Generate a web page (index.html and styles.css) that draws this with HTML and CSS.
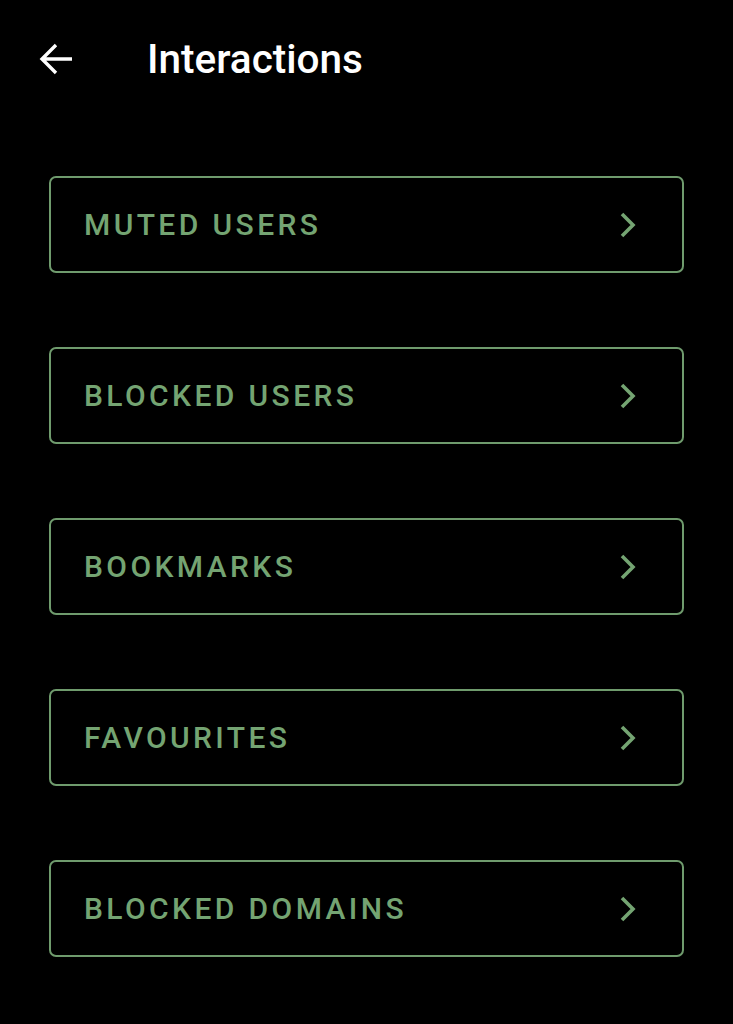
FILE: index.html
```html
<!DOCTYPE html>
<html lang="en">
<head>
  <meta charset="UTF-8">
  <meta name="viewport" content="width=device-width,initial-scale=1">
  <title>Interactions</title>
  <link rel="stylesheet" href="styles.css">
</head>
<body>
  <header class="toolbar">
    <button type="button" class="back-button" aria-label="Back">
      <svg width="34" height="32" viewBox="0 0 34 32"><path d="M3 16H33M17 2L3 16L17 30" fill="none" stroke="#fff" stroke-width="3.4" stroke-linejoin="miter"/></svg>
    </button>
    <h1>Interactions</h1>
  </header>

  <!-- menu entries -->
  <nav class="menu">
    <a class="menu-item" href="#">MUTED USERS<svg class="chevron" width="17" height="26" viewBox="0 0 17 26"><path d="M3 2L14 13L3 24" /></svg></a>
    <a class="menu-item" href="#">BLOCKED USERS<svg class="chevron" width="17" height="26" viewBox="0 0 17 26"><path d="M3 2L14 13L3 24" /></svg></a>
    <a class="menu-item" href="#">BOOKMARKS<svg class="chevron" width="17" height="26" viewBox="0 0 17 26"><path d="M3 2L14 13L3 24" /></svg></a>
    <a class="menu-item" href="#">FAVOURITES<svg class="chevron" width="17" height="26" viewBox="0 0 17 26"><path d="M3 2L14 13L3 24" /></svg></a>
    <a class="menu-item" href="#">BLOCKED DOMAINS<svg class="chevron" width="17" height="26" viewBox="0 0 17 26"><path d="M3 2L14 13L3 24" /></svg></a>
  </nav>
</body>
</html>
```

FILE: styles.css
```css
body {
  margin: 0;
  background: #000;
  color: #fff;
  font-family: Roboto, 'Noto Sans', sans-serif;
}
.toolbar {
  display: flex;
  align-items: center;
  height: 118px;
  padding-left: 39px;
}
.back-button {
  background: none;
  border: none;
  padding: 0;
  width: 34px;
  height: 32px;
  cursor: pointer;
}
.back-button svg {
  display: block;
}
.toolbar h1 {
  margin: 0 0 0 74px;
  font-size: 40.5px;
  font-weight: 500;
}
.menu {
  display: flex;
  flex-direction: column;
  gap: 74px;
  padding: 58px 49px 0 49px;
}
.menu-item {
  display: flex;
  align-items: center;
  justify-content: space-between;
  height: 93px;
  padding: 0 46px 0 33px;
  border: 2px solid #6f9b6d;
  border-radius: 7px;
  color: #74a472;
  text-decoration: none;
  font-size: 30px;
  font-weight: 500;
  letter-spacing: 3.4px;
}
.chevron {
  fill: none;
  stroke: #74a472;
  stroke-width: 3.6;
}
```
